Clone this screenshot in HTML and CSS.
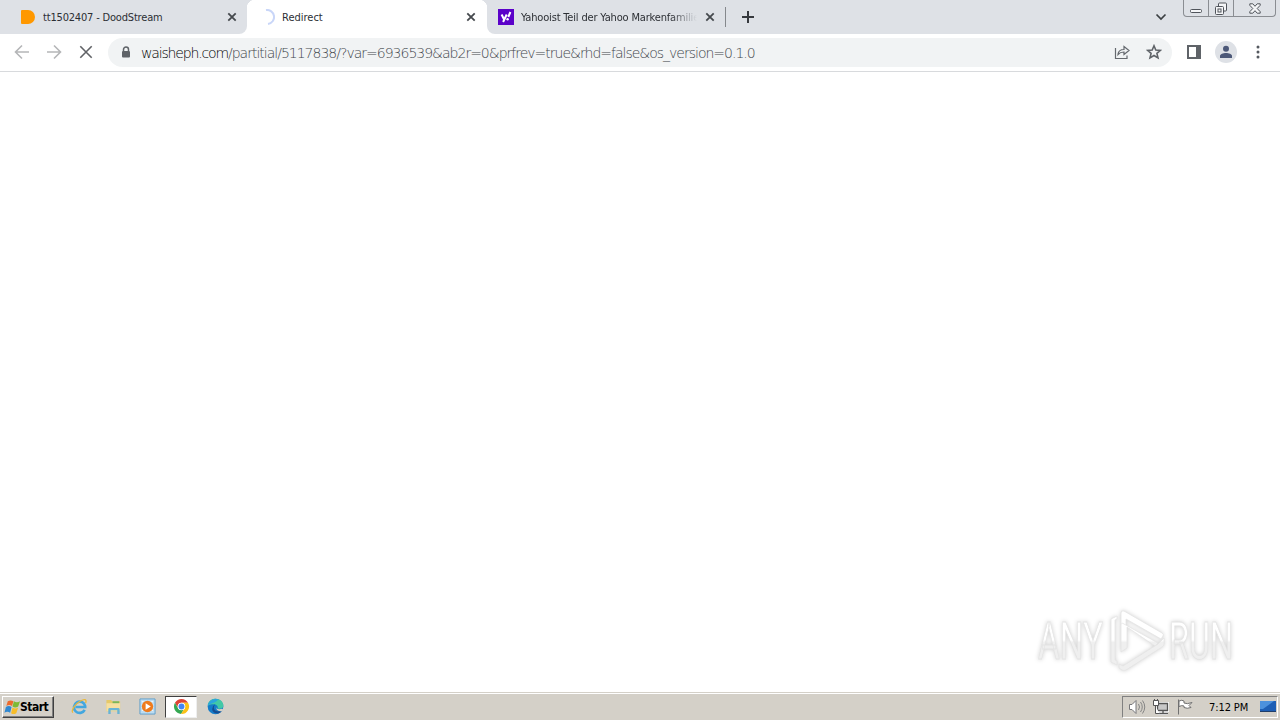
FILE: index.html
```html
<!DOCTYPE html>
<html lang="en">

<head>
  <meta charset="UTF-8">
  <title>Redirect</title>
  <link rel="stylesheet" href="styles.css">
</head>

<body>
  <div class="screen">
    <div class="tabstrip">
      <div class="tab first">
        <svg class="favicon" viewBox="0 0 16 16"><path d="M1 2Q1 1 2 1H8a7 7 0 0 1 0 14H2Q1 15 1 14Z" fill="#ff9800"/></svg>
        <span class="title dood">tt1502407 - DoodStream</span>
        <svg class="close" viewBox="0 0 10 10"><path d="M1.3 1.3l7.4 7.4M8.7 1.3l-7.4 7.4"/></svg>
      </div>
      <div class="tab active">
        <svg class="favicon" viewBox="0 0 16 16"><path d="M7 1a7 7 0 1 1 2 14" fill="none" stroke="#c9d6f8" stroke-width="2"/></svg>
        <span class="title redirect">Redirect</span>
        <svg class="close" viewBox="0 0 10 10"><path d="M1.3 1.3l7.4 7.4M8.7 1.3l-7.4 7.4"/></svg>
      </div>
      <div class="tab last">
        <svg class="favicon" viewBox="0 0 16 16"><path d="M0 0h16v16H0z" fill="#5b01c9"/><path d="M3.6 5.5l2.5 5M8.7 5.5L5.1 13M12.4 3l-2.1 5" fill="none" stroke="#fff" stroke-width="2"/><circle cx="9.6" cy="10.2" r="1.2" fill="#fff"/></svg>
        <span class="title yahoo">Yahooist Teil der Yahoo Markenfamilie</span>
        <svg class="close" viewBox="0 0 10 10"><path d="M1.3 1.3l7.4 7.4M8.7 1.3l-7.4 7.4"/></svg>
      </div>
      <div class="divider"></div>
      <svg class="newtab" viewBox="0 0 12 12"><path d="M6 0v12M0 6h12"/></svg>
      <svg class="chevron" viewBox="0 0 12 8"><path d="M1.5 1.5L6 6l4.5-4.5"/></svg>
      <div class="winbuttons">
        <div class="min"><svg viewBox="0 0 12 4"><rect x=".5" y=".5" width="11" height="3" rx="1"/></svg></div>
        <div class="max"><svg viewBox="0 0 14 14"><path d="M4.5 4V2q0-1 1-1h6q1 0 1 1v6q0 1-1 1h-2"/><rect x="1.5" y="4.5" width="8" height="8" rx="1"/><rect x="4" y="7" width="3" height="3"/></svg></div>
        <div class="quit"><svg viewBox="0 0 12 11"><path d="M.8.8h3L6 3.300 8.200.8h3v1.500L8.200 5.500l3 3.200v1.500h-3L6 7.700l-2.200 2.500h-3V8.700l3-3.200-3-3.200z"/></svg></div>
      </div>
    </div>

    <div class="toolbar">
      <svg class="nav" viewBox="0 0 16 16"><path d="M15 8H2M8 1.5L1.5 8 8 14.5" stroke="#b5b6b8"/></svg>
      <svg class="nav" viewBox="0 0 16 16"><path d="M1 8h13M8 1.5L14.5 8 8 14.5" stroke="#b5b6b8"/></svg>
      <svg class="nav" viewBox="0 0 16 16"><path d="M2.3 2.3l11.4 11.4M13.7 2.3L2.3 13.7" stroke="#606266"/></svg>
      <div class="omnibox">
        <svg class="lock" viewBox="0 0 10 13"><path d="M2.5 5V3.5a2.500 2.500 0 0 1 5 0V5" fill="none" stroke="#5f6368" stroke-width="1.5"/><rect x="1" y="5" width="8" height="6.5" rx="1" fill="#5f6368"/></svg>
        <span class="url"><b>waisheph.com</b>/partitial/5117838/?var=6936539&amp;ab2r=0&amp;prfrev=true&amp;rhd=false&amp;os_version=0.1.0</span>
        <svg class="share" viewBox="0 0 16 16"><path d="M1.500 4v10.500h11.500V11.500M4 10.500c.3-3.500 2.500-5 6-5V2.500l5 4-5 4V8C7.500 8 5.500 8.700 4 10.500z"/></svg>
        <svg class="star" viewBox="0 0 16 16"><path d="M8 1.800l1.800 4.200 4.600.4-3.500 3 1.100 4.500L8 11.500l-4 2.400 1.100-4.500-3.500-3L6.200 6z"/></svg>
      </div>
      <svg class="panel" viewBox="0 0 14 14"><path d="M1 1h12v12H1z" fill="none" stroke="#5f6368" stroke-width="2"/><path d="M9 1h4v12H9z" fill="#5f6368"/></svg>
      <svg class="avatar" viewBox="0 0 22 22"><circle cx="11" cy="11" r="11" fill="#dee1e6"/><circle cx="11" cy="7.800" r="3" fill="#4c5878"/><path d="M5 17v-2c0-2 3.200-3 6-3s6 1 6 3v2z" fill="#4c5878"/></svg>
      <svg class="dots" viewBox="0 0 4 14"><circle cx="2" cy="2" r="1.5"/><circle cx="2" cy="7" r="1.5"/><circle cx="2" cy="12" r="1.5"/></svg>
    </div>

    <div class="page">
      <svg class="watermark" viewBox="0 0 230 80">
        <defs>
          <linearGradient id="fade" gradientUnits="userSpaceOnUse" x1="0" y1="0" x2="0" y2="80">
            <stop offset="0.5" stop-color="#fff"/>
            <stop offset="0.53" stop-color="#efefef"/>
            <stop offset="1" stop-color="#efefef"/>
          </linearGradient>
        </defs>
        <g class="shape">
          <path d="M97 16l-6 3v43l6 3v-4l-2-1V20l2-1z"/>
          <path d="M101 49V13q0-3 3-2l38 22q2 1 1 3l-2 3-35-20v27z" fill="#fff"/>
          <path d="M107 27v21l-6 4V25q0-3 3-1l34 19-3 3z"/>
          <path d="M144 38v6q0 2-2 3l-36 23q-2 1-4 0l-3-2v-4l4 2 35-22z"/>
          <text x="18" y="59" textLength="65" lengthAdjust="spacingAndGlyphs">ANY</text>
          <text x="149" y="59" textLength="64" lengthAdjust="spacingAndGlyphs">RUN</text>
        </g>
      </svg>
    </div>

    <div class="taskbar">
      <div class="start">
        <svg viewBox="0 0 18 16"><path d="M4 2q3-2 6 0L8.500 7Q5.500 5 2.500 7z" fill="#ed6b2d"/><path d="M10.500 2q3 2 6.500 0l-2 5.500q-3 2-6 0z" fill="#7dba35"/><path d="M2 8q3-2 6 0l-1.500 6q-3-2-6 0z" fill="#2f88d1"/><path d="M9 8.500q3 2 6 0l-2 6q-3 2-5.500 0z" fill="#f7bd29"/></svg>
        <span>Start</span>
      </div>
      <div class="apps">
        <div class="app"><svg viewBox="0 0 18 18"><path d="M14.5 12.5A6 6 0 1 1 15 8.500v1H5" fill="none" stroke="#43a7df" stroke-width="2.8"/><path d="M2 15.500C-.5 13 5 6 10 3.200c4-2.400 7-2 5.500 2" fill="none" stroke="#e9b83c" stroke-width="1.4"/></svg></div>
        <div class="app"><svg viewBox="0 0 18 18"><path d="M1.5 2h5l1 1.500H16V14H1.500z" fill="#e6c969"/><path d="M8 3.500h7V8H8z" fill="#79b65b"/><path d="M1.500 5.500h14.500v8.500H1.500z" fill="#f6dfa0"/><path d="M3.500 17v-5q0-1.500 1.500-1.500h9q1.500 0 1.500 1.500v5H13v-4H6v4z" fill="#69b4d5"/></svg></div>
        <div class="app"><svg viewBox="0 0 18 18"><path d="M1 1h16v16H1z" fill="#bddcf1" stroke="#5d9dc9"/><path d="M3 4h2M3 7h2M3 10h2M3 13h2M13 4h2M13 7h2M13 10h2M13 13h2" stroke="#fff"/><circle cx="9" cy="9" r="6" fill="#ee7b1d"/><path d="M7 5.500L12.500 9 7 12.500z" fill="#fff"/></svg></div>
        <div class="app pressed"><svg viewBox="0 0 18 18"><path d="M2.100 5A8 8 0 0 1 15.900 5H9a4 4 0 0 0-3.500 6z" fill="#df4436"/><path d="M2.100 5A8 8 0 0 0 8.500 17l3.700-6A4 4 0 0 1 5.500 11z" fill="#35a853"/><path d="M15.900 5A8 8 0 0 1 8.500 17l4-6.500A4 4 0 0 0 9 5z" fill="#fbc116"/><circle cx="9" cy="9" r="4" fill="#fff"/><circle cx="9" cy="9" r="3.100" fill="#4285f4"/></svg></div>
        <div class="app"><svg viewBox="0 0 18 18"><circle cx="9" cy="9" r="8.300" fill="#147cc9"/><path d="M1 8C1 3 5 .7 9 .7c5 0 8.300 3.300 8.300 7.300 0 3-3 4-6 3 1-4-4-6-10.300-3z" fill="#42c9a6"/><path d="M1 8C2 3 7 0 12 1.500 9 5 5 5 1 8z" fill="#2ba5de"/><path d="M8.500 7c-3 4-.5 8 7 7-4 5-12 1-9.500-4 .5-1.500 1.500-2.700 2.500-3z" fill="#174d91"/><path d="M10.500 9c-1.500 2 1 3.500 5.500 2.500l1.500 1-1.500 1.500c-4 .2-6.500-1.500-6-4z" fill="#d4d0c8"/></svg></div>
      </div>
      <div class="tray">
        <svg class="sound" viewBox="0 0 18 18"><path d="M1.500 6.500H4l4-4v13l-4-4H1.500z" fill="#fff" stroke="#77777a"/><path d="M10.500 6q2 3 0 6M12.500 4q3.500 5 0 10M14.500 2.500q4.500 6.500 0 13" fill="none" stroke="#858585"/></svg>
        <svg class="network" viewBox="0 0 18 18"><path d="M5.500 5.500h10v7h-10zM6 15.500h10M11 13v2" fill="#c8c8c8" stroke="#fff" stroke-width="3"/><path d="M5.500 5.500h10v7h-10zM6 15.500h10M11 13v2" fill="#c8c8c8" stroke="#555" stroke-width="1.3"/><path d="M1.500 2.500h5v5h-5zM2.500 1v2M5.500 1v2M3.500 8v7.500h4" fill="#fff" stroke="#555"/></svg>
        <svg class="flag" viewBox="0 0 18 18"><path d="M2.500 1.500v15M3 3q3-1.500 5 0v2q3 1.500 8-.5l-3 3 2 2q-4 1.500-7 0V8Q6 7 3 8.500z" fill="#fff" stroke="#707070"/></svg>
        <span class="clock">7:12 PM</span>
        <svg class="desktop" viewBox="0 0 16 16"><path d="M0 2h16v10H0z" fill="#1e5fb5"/><path d="M0 2h14L3 10H0z" fill="#4c91dd"/><path d="M0 12.500h16" stroke="#203e69"/></svg>
      </div>
    </div>
  </div>
</body>

</html>
```

FILE: styles.css
```css
* {
  box-sizing: border-box;
}

body {
  margin: 0;
  overflow: hidden;
  font-family: 'DejaVu Sans Condensed', 'DejaVu Sans', sans-serif;
}

svg {
  display: block;
  flex: none;
}

.screen {
  width: 1280px;
  height: 720px;
  display: flex;
  flex-direction: column;
  background: #fff;
}

.tabstrip {
  height: 34px;
  flex: none;
  display: flex;
  align-items: center;
  background: linear-gradient(90deg, #dee1e6 239px, #fff 239px, #fff 495px, #dee1e6 495px);
}

.tab {
  height: 34px;
  display: flex;
  align-items: center;
  background: #dee1e6;
}

.first {
  width: 247px;
  padding: 0 10px 0 20px;
  border-radius: 0 0 8px 0;
}

.active {
  width: 240px;
  padding: 0 11px 0 12px;
  background: radial-gradient(circle at 8px 8px, #fff 8px, #dee1e6 8.5px) 0 0 / 8px 8px no-repeat, radial-gradient(circle at 0 8px, #fff 8px, #dee1e6 8.5px) 100% 0 / 8px 8px no-repeat, #fff;
}

.last {
  width: 238px;
  padding: 0 10px 0 11px;
  border-radius: 0 0 0 8px;
}

.favicon {
  width: 16px;
  height: 16px;
}

.title {
  margin-left: 7px;
  padding-top: 1px;
  font-size: 11px;
  line-height: 16px;
  color: #2c2f34;
  white-space: nowrap;
  overflow: hidden;
}

.dood {
  letter-spacing: -0.18px;
}

.yahoo {
  width: 176px;
  letter-spacing: -0.17px;
  -webkit-mask-image: linear-gradient(90deg, #000 85%, transparent);
  mask-image: linear-gradient(90deg, #000 85%, transparent);
}

.close {
  width: 10px;
  height: 10px;
  margin-left: auto;
  stroke: #45494d;
  stroke-width: 1.8;
}

.divider {
  width: 1px;
  height: 20px;
  background: #85888c;
}

.newtab {
  width: 12px;
  height: 12px;
  margin-left: 16px;
  stroke: #36393e;
  stroke-width: 2;
}

.chevron {
  width: 12px;
  height: 8px;
  margin-left: auto;
  fill: none;
  stroke: #3c4043;
  stroke-width: 1.7;
}

.winbuttons {
  width: 93px;
  height: 17px;
  margin: 0 4px 0 16px;
  align-self: flex-start;
  display: flex;
  border: 1px solid #8a8d92;
  border-top: 0;
  border-radius: 0 0 4px 4px;
}

.winbuttons div {
  display: flex;
  justify-content: center;
  align-items: center;
  border-right: 1px solid #8a8d92;
}

.winbuttons svg {
  fill: #f4f5f7;
  stroke: #50545b;
}

.winbuttons .min {
  width: 25px;
  padding-top: 5px;
}

.min svg {
  width: 12px;
  height: 4px;
}

.winbuttons .max {
  width: 25px;
  padding-top: 1px;
}

.max svg {
  width: 14px;
  height: 14px;
}

.winbuttons .quit {
  flex: 1;
  border: 0;
}

.quit svg {
  width: 12px;
  height: 11px;
}

.toolbar {
  height: 38px;
  flex: none;
  padding: 0 20px 1px 14px;
  display: flex;
  align-items: center;
  border-bottom: 1px solid #d8dadd;
}

.nav {
  width: 16px;
  height: 16px;
  margin-right: 16px;
  fill: none;
  stroke-width: 1.6;
}

.omnibox {
  width: 1064px;
  height: 29px;
  margin-left: -2px;
  padding: 0 10px 0 13px;
  border-radius: 15px;
  display: flex;
  align-items: center;
  background: #f1f3f4;
}

.lock {
  width: 10px;
  height: 13px;
}

.url {
  margin-left: 10px;
  padding-top: 1px;
  font-family: 'DejaVu Sans Light', 'DejaVu Sans', sans-serif;
  font-weight: 200;
  font-size: 14px;
  line-height: 20px;
  letter-spacing: -1px;
  color: #43474c;
  white-space: nowrap;
}

.url b {
  color: #000;
  font-weight: 200;
  letter-spacing: -1.15px;
}

.share {
  width: 16px;
  height: 16px;
  margin-left: auto;
  fill: none;
  stroke: #65696e;
  stroke-width: 1.2;
}

.star {
  width: 16px;
  height: 16px;
  margin-left: 16px;
  fill: none;
  stroke: #5f6368;
  stroke-width: 1.6;
}

.panel {
  width: 14px;
  height: 14px;
  margin-left: 15px;
}

.avatar {
  width: 22px;
  height: 22px;
  margin-left: 14px;
}

.dots {
  width: 4px;
  height: 14px;
  margin-left: auto;
  fill: #55595f;
}

.page {
  flex: 1;
  display: flex;
  justify-content: flex-end;
  align-items: flex-end;
  padding: 0 30px 12px 0;
}

.watermark {
  width: 230px;
  height: 80px;
  overflow: visible;
}

.shape {
  fill: url(#fade);
  stroke: #e4e4e4;
  stroke-width: 0.8;
  filter: drop-shadow(0 0 2px #d0d0d0);
}

.shape text {
  font-family: Roboto, sans-serif;
  font-size: 51px;
  font-weight: 400;
}

.taskbar {
  height: 28px;
  flex: none;
  display: flex;
  align-items: center;
  padding: 1px 2px 1px;
  border-top: 1px solid #d4d0c8;
  box-shadow: inset 0 1px #fff;
  background: #d4d0c8;
}

.start {
  width: 52px;
  height: 22px;
  padding: 0 1px;
  display: flex;
  align-items: center;
  border: 1px solid;
  border-color: #fff #404040 #404040 #fff;
  box-shadow: inset -1px -1px #808080;
  font-size: 12px;
  font-weight: bold;
}

.start svg {
  width: 17px;
  height: 16px;
  margin-right: -1px;
}

.start span {
  letter-spacing: -0.5px;
}

.apps {
  display: flex;
  margin-left: 9px;
  gap: 2px;
}

.app {
  width: 32px;
  height: 22px;
  display: flex;
  align-items: center;
  justify-content: center;
}

.app svg {
  width: 17px;
  height: 17px;
}

.pressed {
  background: #fff;
  border: 1px solid;
  border-color: #404040 #eee #eee #404040;
}

.tray {
  width: 156px;
  height: 22px;
  margin-left: auto;
  padding: 0 1px 0 5px;
  display: flex;
  align-items: center;
  border: 1px solid;
  border-color: #808080 #fff #fff #808080;
}

.tray svg {
  width: 18px;
  height: 18px;
  margin-right: 6px;
}

.clock {
  margin-left: 9px;
  padding-top: 1px;
  font-size: 11px;
  letter-spacing: -0.1px;
  white-space: nowrap;
}

.tray .desktop {
  width: 16px;
  height: 16px;
  margin: 0 0 0 auto;
}
```
